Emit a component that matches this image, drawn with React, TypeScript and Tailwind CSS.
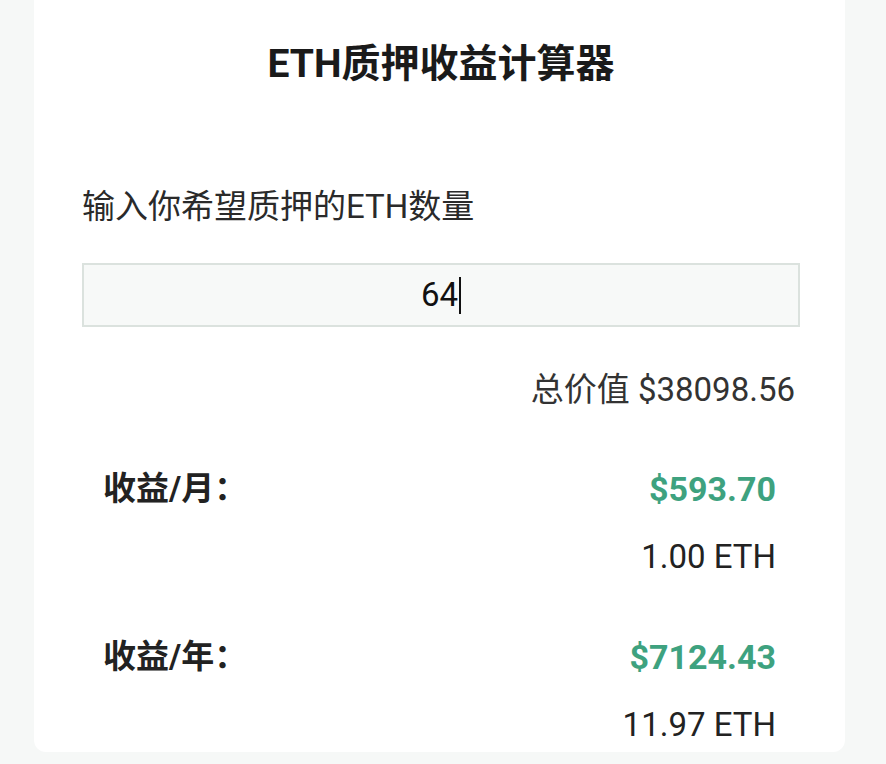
import React from 'react';

const font = { fontFamily: 'Roboto, "Noto Sans CJK SC", sans-serif' };

const ResultRow: React.FC<{ label: string; usd: string; eth: string }> = ({ label, usd, eth }) => (
  <div className="pl-[21px] pr-[24px]">
    <div className="flex items-center justify-between h-[48px]">
      <span className="text-[33px] font-bold text-[#222]">{label}</span>
      <span className="text-[34px] font-bold text-[#3ea27f]">{usd}</span>
    </div>
    <div className="flex justify-end h-[48px] items-center mt-[20px]">
      <span className="text-[33px] text-[#222]">{eth}</span>
    </div>
  </div>
);

export default function App() {
  return (
    <div className="min-h-screen bg-[#f6f8f7]" style={font}>
      <div className="w-[811px] ml-[34px] bg-white rounded-b-xl h-[752px] pt-[40px] pl-[48px] pr-[45px]">
        <h1 className="text-center text-[39px] font-bold leading-[48px] text-[#1a1a1a]">ETH质押收益计算器</h1>

        <p className="mt-[99px] text-[33px] leading-[40px] text-[#2a2a2a]">输入你希望质押的ETH数量</p>

        <div className="mt-[36px] h-[64px] border-2 border-[#dbe2de] bg-[#f7f9f8] flex items-center justify-center">
          <span className="text-[33px] text-[#111] flex items-center">
            64<span className="inline-block w-[2px] h-[37px] bg-[#111] ml-[1px]"></span>
          </span>
        </div>

        <div className="mt-[39px] flex justify-end text-[33px] leading-[48px] text-[#333] pr-[5px]">总价值 $38098.56</div>

        <div className="mt-[51px]">
          <ResultRow label="收益/月：" usd="$593.70" eth="1.00 ETH" />
          <div className="mt-[52px]">
            <ResultRow label="收益/年：" usd="$7124.43" eth="11.97 ETH" />
          </div>
        </div>
      </div>
    </div>
  );
}
